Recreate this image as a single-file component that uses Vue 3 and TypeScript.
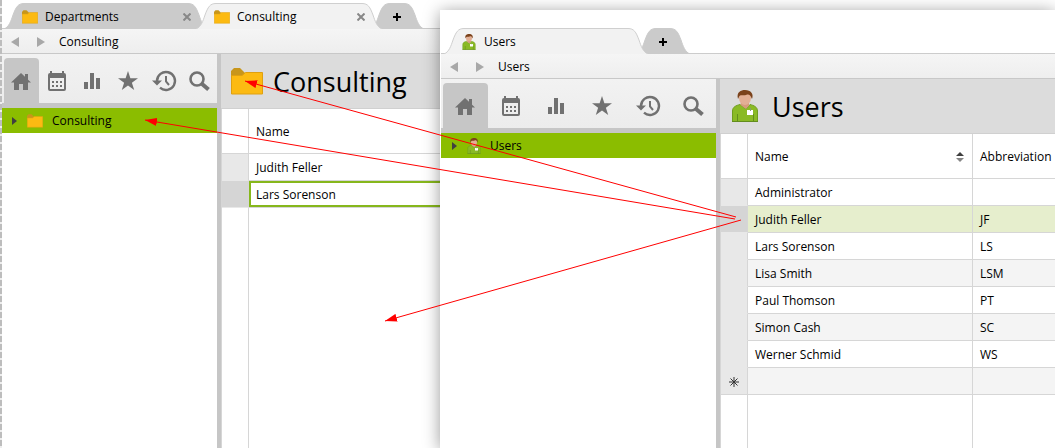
<script setup lang="ts">
import { defineComponent, h } from 'vue'

type NavIcon = 'home' | 'calendar' | 'chart' | 'star' | 'history' | 'search'
interface UserRow { name: string; abbr: string; active?: boolean }
interface Arrow { x1: number; y1: number; x2: number; y2: number }

const navItems: { icon: NavIcon; label: string }[] = [
  { icon: 'home', label: 'Home' },
  { icon: 'calendar', label: 'Calendar' },
  { icon: 'chart', label: 'Reports' },
  { icon: 'star', label: 'Favorites' },
  { icon: 'history', label: 'History' },
  { icon: 'search', label: 'Search' },
]

const members = [
  { name: 'Judith Feller', current: false },
  { name: 'Lars Sorenson', current: true },
]

const users: UserRow[] = [
  { name: 'Administrator', abbr: '' },
  { name: 'Judith Feller', abbr: 'JF', active: true },
  { name: 'Lars Sorenson', abbr: 'LS' },
  { name: 'Lisa Smith', abbr: 'LSM' },
  { name: 'Paul Thomson', abbr: 'PT' },
  { name: 'Simon Cash', abbr: 'SC' },
  { name: 'Werner Schmid', abbr: 'WS' },
]

const arrows: Arrow[] = [
  { x1: 736, y1: 217, x2: 245, y2: 81 },
  { x1: 735, y1: 219, x2: 145, y2: 120 },
  { x1: 741, y1: 220, x2: 385, y2: 321 },
]

const tabPath = (w: number, close: boolean) =>
  `M0 26 C5 24 7 18 9 12 C12 4 14 .5 20 .5 H${w - 20} C${w - 14} .5 ${w - 12} 4 ${w - 9} 12 C${w - 7} 18 ${w - 5} 24 ${w} 26${close ? 'Z' : ''}`

const TabShape = defineComponent({
  props: { width: { type: Number, required: true }, active: Boolean },
  setup(p) {
    return () => h('svg', { width: p.width, height: 26, viewBox: `0 0 ${p.width} 26`, 'aria-hidden': 'true' }, [
      h('path', { d: tabPath(p.width, true), fill: p.active ? '#f2f2f2' : '#cbcbcb' }),
      h('path', { d: tabPath(p.width, false), fill: 'none', stroke: p.active ? '#cfcfcf' : '#cbcbcb' }),
    ])
  },
})

const FolderIcon = defineComponent({
  setup() {
    return () => h('svg', { viewBox: '0 0 32 27', 'aria-hidden': 'true' }, [
      h('path', { d: 'M0 7V3L3 0H9L14 5V8H0Z', fill: '#c8961b' }),
      h('path', { d: 'M.5 7.5H11L14.5 4.5H31.5V26H.5Z', fill: '#fcba12', stroke: '#dfa010' }),
    ])
  },
})

const PersonIcon = defineComponent({
  setup() {
    return () => h('svg', { viewBox: '0 0 26 32', 'aria-hidden': 'true' }, [
      h('path', { d: 'M.5 31.5V21C.5 17 4 15.500 8 14.500L14 19L18 14.500C22 15.500 25.500 17 25.500 21V31.500Z', fill: '#8aba25', stroke: '#6f9d1e' }),
      h('path', { d: 'M9 11H17V15.500L14 19L8.500 15Z', fill: '#d59b7c' }),
      h('ellipse', { cx: 13, cy: 8, rx: 6, ry: 7, fill: '#e2af94' }),
      h('path', { d: 'M6 9C4 2 9 0 13 0C19 0 22 4 20 9L19 7C18 5 17 4 14 5C11 6 8 4 7 7Z', fill: '#7b421b' }),
      h('path', { d: 'M5.500 24V31M21.500 24V31M0 31.500H26', fill: 'none', stroke: '#638d1d' }),
      h('path', { d: 'M15 20H21V25H15Z', fill: '#fff' }),
      h('path', { d: 'M18.500 18V21', stroke: '#8b9b74' }),
    ])
  },
})

const iconShapes: Record<NavIcon, () => ReturnType<typeof h>[]> = {
  home: () => [
    h('path', { d: 'M10 2L20 11.500H17V19H12V13H8V19H3V11.500H0Z' }),
    h('path', { d: 'M14 3H17V10H14Z' }),
  ],
  calendar: () => [
    h('path', { d: 'M3 0H5V2H15V0H17V2Q19 2 19 4V18Q19 20 17 20H3Q1 20 1 18V4Q1 2 3 2ZM3 7V18H17V7Z', 'fill-rule': 'evenodd' }),
    h('path', { d: 'M5 10H7V12H5ZM9 10H11V12H9ZM13 10H15V12H13ZM5 14H7V16H5ZM9 14H11V16H9ZM13 14H15V16H13Z' }),
  ],
  chart: () => [h('path', { d: 'M2 11H6V18H2ZM8 2H12V18H8ZM14 7H18V18H14Z' })],
  star: () => [h('path', { d: 'M10 0L12.400 7.200H20L13.900 11.700L16.200 19L10 14.500L3.800 19L6.100 11.700L0 7.200H7.600Z' })],
  history: () => [
    h('path', { d: 'M4 10A9 9 0 1 1 7 16.700', fill: 'none', stroke: 'currentColor', 'stroke-width': 2.4 }),
    h('path', { d: 'M-1 9.500H9L4 14.500Z' }),
    h('path', { d: 'M13 5V10.500L16 14', fill: 'none', stroke: 'currentColor', 'stroke-width': 2 }),
  ],
  search: () => [
    h('circle', { cx: 8, cy: 8, r: 6.500, fill: 'none', stroke: 'currentColor', 'stroke-width': 2.6 }),
    h('path', { d: 'M12.500 12.500L19.500 18.500', fill: 'none', stroke: 'currentColor', 'stroke-width': 4 }),
  ],
}

const NavGlyph = defineComponent({
  props: { name: { type: String as () => NavIcon, required: true } },
  setup(p) {
    return () => h('svg', { viewBox: '0 0 20 20', width: 20, height: 20, fill: 'currentColor', overflow: 'visible', 'aria-hidden': 'true' }, iconShapes[p.name]())
  },
})
</script>

<template>
  <main class="desktop">
    <section class="window back" aria-label="Consulting window">
      <div class="tabs">
        <div class="tab wide">
          <TabShape class="shape" :width="204" />
          <FolderIcon class="small-icon" />
          <span class="tab-label">Departments</span>
          <button class="close" aria-label="Close Departments">
            <svg width="8" height="8" viewBox="0 0 8 8"><path d="M.5 .5L7.500 7.500M7.500 .5L.5 7.500" stroke="#888" stroke-width="2" /></svg>
          </button>
        </div>
        <div class="tab medium active">
          <TabShape class="shape" :width="186" active />
          <FolderIcon class="small-icon" />
          <span class="tab-label">Consulting</span>
          <button class="close" aria-label="Close Consulting">
            <svg width="8" height="8" viewBox="0 0 8 8"><path d="M.5 .5L7.500 7.500M7.500 .5L.5 7.500" stroke="#888" stroke-width="2" /></svg>
          </button>
        </div>
        <button class="tab add" aria-label="New tab">
          <TabShape class="shape" :width="54" />
          <svg width="8" height="8" viewBox="0 0 8 8"><path d="M4 0V8M0 4H8" stroke="#000" stroke-width="2" /></svg>
        </button>
      </div>
      <div class="crumbs">
        <button class="step" aria-label="Back"><svg width="8" height="10" viewBox="0 0 8 10"><path d="M8 0V10L0 5Z" fill="#a8a8a8" /></svg></button>
        <button class="step" aria-label="Forward"><svg width="8" height="10" viewBox="0 0 8 10"><path d="M0 0V10L8 5Z" fill="#a8a8a8" /></svg></button>
        <span>Consulting</span>
      </div>
      <div class="body">
        <aside class="sidebar">
          <nav class="nav">
            <button v-for="(item, i) in navItems" :key="item.icon" :class="['nav-item', { chosen: i === 0 }]" :aria-label="item.label">
              <NavGlyph :name="item.icon" />
            </button>
          </nav>
          <button class="node">
            <svg width="5" height="8" viewBox="0 0 5 8"><path d="M0 0V8L5 4Z" fill="#404040" /></svg>
            <FolderIcon class="small-icon" />
            <span>Consulting</span>
          </button>
        </aside>
        <div class="content">
          <header class="title">
            <span class="title-icon"><FolderIcon class="big-folder" /></span>
            <h1>Consulting</h1>
          </header>
          <table>
            <colgroup><col class="marker-col" /><col /></colgroup>
            <thead><tr><th></th><th>Name</th></tr></thead>
            <tbody>
              <tr v-for="m in members" :key="m.name" :class="{ current: m.current }">
                <td class="marker"></td><td class="value">{{ m.name }}</td>
              </tr>
              <tr class="rest"><td></td><td></td></tr>
            </tbody>
          </table>
        </div>
      </div>
    </section>

    <section class="window front" aria-label="Users window">
      <div class="tabs">
        <div class="tab wide active">
          <TabShape class="shape" :width="204" active />
          <PersonIcon class="small-person" />
          <span class="tab-label">Users</span>
        </div>
        <button class="tab add" aria-label="New tab">
          <TabShape class="shape" :width="54" />
          <svg width="8" height="8" viewBox="0 0 8 8"><path d="M4 0V8M0 4H8" stroke="#000" stroke-width="2" /></svg>
        </button>
      </div>
      <div class="crumbs">
        <button class="step" aria-label="Back"><svg width="8" height="10" viewBox="0 0 8 10"><path d="M8 0V10L0 5Z" fill="#a8a8a8" /></svg></button>
        <button class="step" aria-label="Forward"><svg width="8" height="10" viewBox="0 0 8 10"><path d="M0 0V10L8 5Z" fill="#a8a8a8" /></svg></button>
        <span>Users</span>
      </div>
      <div class="body">
        <aside class="sidebar">
          <nav class="nav">
            <button v-for="(item, i) in navItems" :key="item.icon" :class="['nav-item', { chosen: i === 0 }]" :aria-label="item.label">
              <NavGlyph :name="item.icon" />
            </button>
          </nav>
          <button class="node">
            <svg width="5" height="8" viewBox="0 0 5 8"><path d="M0 0V8L5 4Z" fill="#404040" /></svg>
            <PersonIcon class="small-person" />
            <span>Users</span>
          </button>
        </aside>
        <div class="content">
          <header class="title">
            <span class="title-icon"><PersonIcon class="big-person" /></span>
            <h1>Users</h1>
          </header>
          <table>
            <colgroup><col class="marker-col" /><col class="name-col" /><col /></colgroup>
            <thead>
              <tr>
                <th></th>
                <th>
                  <div class="sortable">
                    <span>Name</span>
                    <svg width="8" height="10" viewBox="0 0 8 10" aria-hidden="true"><path d="M0 4L4 0L8 4Z" fill="#404040" /><path d="M0 6L4 10L8 6Z" fill="#858585" /></svg>
                  </div>
                </th>
                <th>Abbreviation</th>
              </tr>
            </thead>
            <tbody>
              <tr v-for="(u, i) in users" :key="u.name" :class="{ alt: i % 2 === 1, selected: u.active }">
                <td class="marker"></td><td>{{ u.name }}</td><td>{{ u.abbr }}</td>
              </tr>
              <tr class="alt">
                <td class="marker new">
                  <svg width="12" height="12" viewBox="0 0 12 12" aria-hidden="true"><path d="M6 1V11M1 6H11M2.500 2.500L9.500 9.500M9.500 2.500L2.500 9.500" stroke="#333" /></svg>
                </td><td></td><td></td>
              </tr>
              <tr class="rest"><td></td><td></td><td></td></tr>
            </tbody>
          </table>
        </div>
      </div>
    </section>

    <svg class="arrows" aria-hidden="true">
      <defs>
        <marker id="arrow-head" markerUnits="userSpaceOnUse" markerWidth="12" markerHeight="8" refX="12" refY="4" orient="auto">
          <path d="M0 0L12 4L0 8Z" fill="#f00" />
        </marker>
      </defs>
      <line v-for="a in arrows" :key="a.x2" :x1="a.x1" :y1="a.y1" :x2="a.x2" :y2="a.y2" stroke="#f00" marker-end="url(#arrow-head)" />
    </svg>
  </main>
</template>

<style>
body { margin: 0; }
</style>

<style scoped>
.desktop {
  position: relative;
  display: flex;
  min-height: 100vh;
  overflow: hidden;
  box-sizing: border-box;
  padding-left: 2px;
  background: repeating-linear-gradient(#bdbdbd 0 6px, #eee 6px 8px);
  font: 12px/16px "Open Sans", "Noto Sans", sans-serif;
  color: #000;
}
.window {
  display: flex;
  flex-direction: column;
  box-sizing: border-box;
  background: #fff;
}
.back { flex: 1; padding-top: 3px; }
.front {
  position: absolute;
  left: 440px;
  top: 10px;
  right: 0;
  bottom: 0;
  padding: 18px 0 0 1px;
  box-shadow: 0 2px 16px rgba(0, 0, 0, 0.4);
}
button {
  margin: 0;
  padding: 0;
  border: 0;
  background: none;
  font: inherit;
  color: inherit;
}
svg { display: block; flex: none; }
.tabs {
  display: flex;
  height: 25px;
  padding-left: 2px;
}
.front .tabs { padding-left: 3px; }
.tab {
  position: relative;
  display: flex;
  align-items: center;
  flex: none;
  box-sizing: border-box;
  height: 26px;
  padding: 2px 15px 0 18px;
  isolation: isolate;
}
.tab.active { z-index: 1; }
.tab + .tab { margin-left: -12px; }
.wide { width: 204px; }
.medium { width: 186px; }
.tab.add {
  width: 54px;
  justify-content: center;
  padding: 2px 0 0;
}
.shape {
  position: absolute;
  left: 0;
  top: 0;
  z-index: -1;
}
.tab-label { flex: 1; margin-left: 7px; }
.front .tab-label { margin-left: 8px; }
.small-icon { width: 16px; height: 14px; }
.small-person { width: 14px; height: 16px; }
.close { padding: 2px; }
.crumbs {
  display: flex;
  align-items: center;
  flex: none;
  box-sizing: border-box;
  height: 26px;
  padding: 2px 0 0 9px;
  border-top: 1px solid #ccc;
  border-bottom: 1px solid #c8c8c8;
  background: linear-gradient(#f5f5f5, #eee);
}
.step { margin-right: 18px; }
.step + .step { margin-right: 14px; }
.body { display: flex; flex: 1; }
.sidebar {
  flex: none;
  width: 215px;
  border-right: 4px solid #c6c6c6;
}
.front .sidebar { width: 275px; }
.nav {
  display: grid;
  grid-template-columns: repeat(6, 1fr);
  box-sizing: border-box;
  height: 54px;
  padding: 4px 0 0 2px;
  border-bottom: 5px solid #c6c6c6;
  background: linear-gradient(#f2f2f2, #ececec);
}
.nav-item {
  display: flex;
  align-items: center;
  justify-content: center;
  margin-right: 1px;
  color: #717171;
}
.chosen { border-radius: 4px 4px 0 0; background: #c6c6c6; }
.node {
  display: flex;
  align-items: center;
  box-sizing: border-box;
  width: 100%;
  height: 25px;
  padding: 1px 0 0 10px;
  background: #8bbd00;
}
.front .node { padding-left: 11px; }
.node svg + svg { margin: 0 9px 0 10px; }
.content {
  display: grid;
  grid-template-rows: auto 1fr;
  flex: 1;
  min-width: 0;
}
.title {
  display: flex;
  align-items: center;
  gap: 10px;
  box-sizing: border-box;
  height: 55px;
  padding-left: 10px;
  border-bottom: 1px solid #d0d0d0;
  background: #dcdcdc;
}
.title-icon { width: 32px; }
.big-folder { width: 32px; height: 27px; }
.big-person { width: 26px; height: 32px; margin-left: 2px; }
h1 { margin: 0; padding-top: 2px; font-size: 27px; line-height: 36px; font-weight: 400; }
table {
  width: 100%;
  table-layout: fixed;
  border-collapse: separate;
  border-spacing: 0;
  border-left: 1px solid #d6d6d6;
}
.marker-col { width: 27px; }
.name-col { width: 225px; }
th, td {
  box-sizing: border-box;
  height: 27px;
  padding: 2px 7px 0;
  border-right: 1px solid #d6d6d6;
  border-bottom: 1px solid #d6d6d6;
  text-align: left;
  font-weight: 400;
}
th:last-child, td:last-child { border-right: 0; }
th { height: 45px; }
.sortable { display: flex; align-items: center; justify-content: space-between; padding-right: 1px; }
.marker { background: #e8e8e8; border-bottom-color: #e8e8e8; }
.marker.new { padding: 1px 0 0; border-bottom-color: #d6d6d6; }
.new svg { margin: 0 auto; }
.alt td:not(.marker) { background: #f4f4f4; }
.selected td:not(.marker) { background: #e6eecd; }
.selected .marker, .current .marker { background: #d5d5d5; }
.current .value { box-shadow: inset 0 0 0 2px #86b71c; }
.rest td { height: auto; border-bottom: 0; }
.arrows {
  position: absolute;
  left: 0;
  top: 0;
  width: 100%;
  height: 100%;
  pointer-events: none;
}
</style>
